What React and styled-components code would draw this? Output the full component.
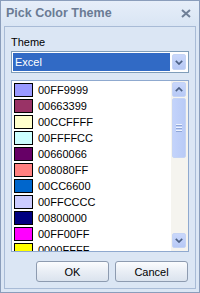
import React from "react";
import styled, { createGlobalStyle } from "styled-components";

const Global = createGlobalStyle`
  html, body { margin: 0; padding: 0; background: #dbe6f4; }
  * { box-sizing: border-box; }
`;

const Dialog = styled.div`
  width: 200px;
  height: 293px;
  border: 1px solid #8a9dbb;
  background: #dbe6f4;
  display: flex;
  flex-direction: column;
  font-family: "Liberation Sans", Arial, sans-serif;
  font-size: 11px;
  color: #000;
  overflow: hidden;
`;

const TitleBar = styled.div`
  height: 25px;
  flex: none;
  display: flex;
  align-items: center;
  justify-content: space-between;
  padding: 0 8px 1px 5px;
  background: linear-gradient(#e6eef9, #d9e5f4);
`;

const Title = styled.div`
  font-weight: bold;
  font-size: 12.5px;
  color: #6a7b94;
`;

const Close = styled.svg`
  width: 10px;
  height: 9px;
  display: block;
`;

const Body = styled.div`
  flex: 1;
  margin: 0 3px 3px 3px;
  border: 1px solid #a8bbd6;
  padding: 9px 6px 6px 6px;
  display: flex;
  flex-direction: column;
`;

const Label = styled.div`
  height: 13px;
  line-height: 13px;
  margin-bottom: 2px;
`;

const Combo = styled.div`
  height: 22px;
  flex: none;
  border: 1px solid #7f9db9;
  background: #fff;
  padding: 1px 2px 1px 1px;
  display: flex;
  align-items: center;
  gap: 2px;
`;

const ComboValue = styled.div`
  flex: 1;
  height: 18px;
  background: #316ac5;
  color: #fff;
  line-height: 18px;
  padding-left: 2px;
`;

const ArrowButton = styled.div`
  width: 14px;
  height: ${(p) => p.$h || 16}px;
  flex: none;
  border: 1px solid #c5d4f5;
  border-radius: 2px;
  background: linear-gradient(#c9d7fb, #b7c9f5);
  display: flex;
  align-items: center;
  justify-content: center;
`;

const Chevron = ({ up }) => (
  <svg width="8" height="5" viewBox="0 0 8 5" style={{ display: "block" }}>
    <polyline
      points={up ? "0.8,4.2 4,1 7.2,4.2" : "0.8,0.8 4,4 7.2,0.8"}
      fill="none"
      stroke="#4d6185"
      strokeWidth="1.7"
    />
  </svg>
);

const List = styled.div`
  margin-top: 7px;
  height: 172px;
  flex: none;
  border: 1px solid #8fa9cf;
  background: #fff;
  display: flex;
  overflow: hidden;
`;

const Rows = styled.div`
  flex: 1;
  padding: 1px 0 0 2px;
  overflow: hidden;
`;

const Row = styled.div`
  height: 16px;
  display: flex;
  align-items: center;
  gap: 5px;
`;

const Swatch = styled.div`
  width: 19px;
  height: 14px;
  border: 1px solid #000;
  background: ${(p) => p.$c};
  flex: none;
`;

const RowText = styled.span`
  line-height: 14px;
`;

const ScrollBar = styled.div`
  width: 17px;
  flex: none;
  background: #f5f4ef;
  padding: 1px 2px 3px 1px;
  display: flex;
  flex-direction: column;
  gap: 1px;
`;

const Thumb = styled.div`
  height: 60px;
  border: 1px solid #c5d4f5;
  border-radius: 2px;
  background: linear-gradient(90deg, #c3d3fb, #b9cbf6);
  display: flex;
  flex-direction: column;
  align-items: center;
  justify-content: center;
  gap: 1px;
`;

const Grip = styled.div`
  width: 6px;
  height: 1px;
  background: #eef3fe;
  box-shadow: 0 1px 0 #8ea6d8;
  margin-bottom: 1px;
`;

const Track = styled.div`
  flex: 1;
`;

const Buttons = styled.div`
  margin-top: 9px;
  display: flex;
  justify-content: flex-end;
  gap: 6px;
  padding-right: 1px;
`;

const Button = styled.div`
  width: 73px;
  height: 21px;
  border: 1px solid #8d9bb0;
  border-radius: 3px;
  background: linear-gradient(#fbfcfe, #e9eef5 50%, #dbe3ee);
  display: flex;
  align-items: center;
  justify-content: center;
  font-size: 11px;
`;

const colors = [
  ["00FF9999", "#9999FF"],
  ["00663399", "#993366"],
  ["00CCFFFF", "#FFFFCC"],
  ["00FFFFCC", "#CCFFFF"],
  ["00660066", "#660066"],
  ["008080FF", "#FF8080"],
  ["00CC6600", "#0066CC"],
  ["00FFCCCC", "#CCCCFF"],
  ["00800000", "#000080"],
  ["00FF00FF", "#FF00FF"],
  ["0000FFFF", "#FFFF00"],
];

export default function App() {
  return (
    <>
      <Global />
      <Dialog>
        <TitleBar>
          <Title>Pick Color Theme</Title>
          <Close viewBox="0 0 10 9">
            <path d="M1 1 L9 8 M9 1 L1 8" stroke="#6f7f97" strokeWidth="2" fill="none" />
          </Close>
        </TitleBar>
        <Body>
          <Label>Theme</Label>
          <Combo>
            <ComboValue>Excel</ComboValue>
            <ArrowButton>
              <Chevron />
            </ArrowButton>
          </Combo>
          <List>
            <Rows>
              {colors.map(([t, c]) => (
                <Row key={t}>
                  <Swatch $c={c} />
                  <RowText>{t}</RowText>
                </Row>
              ))}
            </Rows>
            <ScrollBar>
              <ArrowButton $h={15}>
                <Chevron up />
              </ArrowButton>
              <Thumb>
                <Grip />
                <Grip />
                <Grip />
              </Thumb>
              <Track />
              <ArrowButton $h={15}>
                <Chevron />
              </ArrowButton>
            </ScrollBar>
          </List>
          <Buttons>
            <Button>OK</Button>
            <Button>Cancel</Button>
          </Buttons>
        </Body>
      </Dialog>
    </>
  );
}
